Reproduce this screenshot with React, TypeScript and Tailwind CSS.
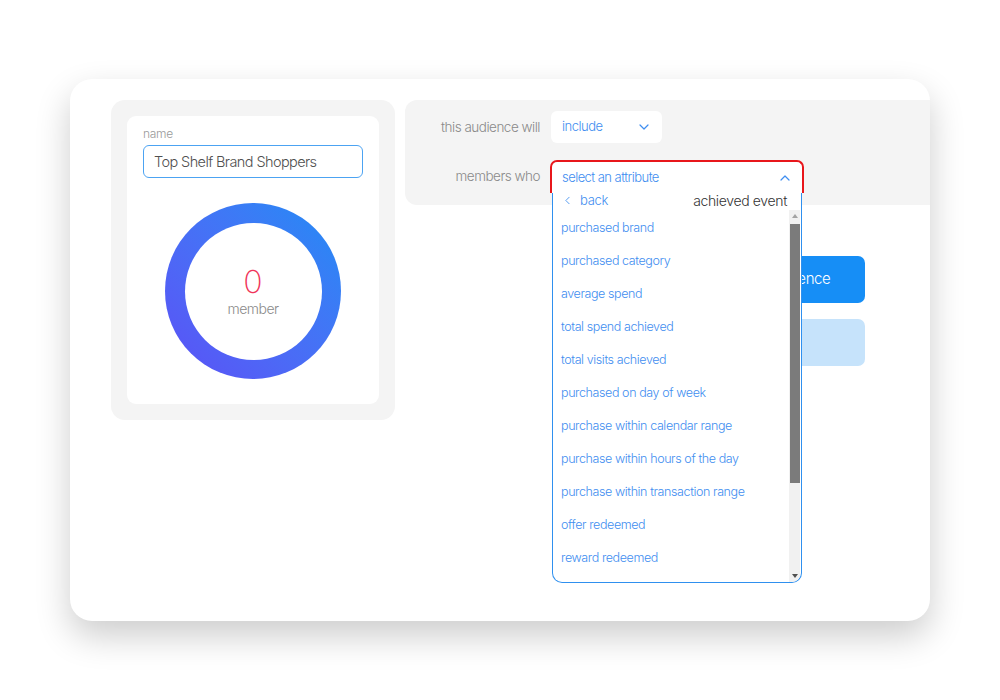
import React from 'react';
import { ChevronDown, ChevronUp, ChevronLeft } from 'lucide-react';

const ATTRIBUTES = [
  'purchased brand',
  'purchased category',
  'average spend',
  'total spend achieved',
  'total visits achieved',
  'purchased on day of week',
  'purchase within calendar range',
  'purchase within hours of the day',
  'purchase within transaction range',
  'offer redeemed',
  'reward redeemed',
];

// audience size ring
function MemberRing({ count }: { count: number }) {
  return (
    <div className="w-[176px] h-[176px] rounded-full bg-linear-to-bl from-[#1a8cf5] to-[#5a4ff6] flex items-center justify-center">
      <div className="w-[137px] h-[137px] rounded-full bg-white flex flex-col items-center justify-center">
        <span className="text-[32px] leading-none font-extralight text-[#f0345a] mt-[2px]">{count}</span>
        <span className="text-[14px] font-light tracking-[-0.5px] text-[#8a8a8a] leading-[18px] mt-[2px]">member</span>
      </div>
    </div>
  );
}

function AttributeDropdown() {
  return (
    <div className="absolute left-[145px] top-[60px] w-[254px] z-10">
      <div className="h-[33px] border-2 border-b-0 border-[#e8161b] rounded-t-[7px] bg-white flex items-center justify-between pl-[10px] pr-[9px]">
        <span className="text-[13px] tracking-[-0.55px] text-[#3f8ef0] font-light">select an attribute</span>
        <ChevronUp size={16} strokeWidth={1.8} className="text-[#3f8ef0]" />
      </div>
      <div className="mx-[2px] h-[390px] border border-t-0 border-[#2f90ef] rounded-b-[10px] bg-white flex flex-col overflow-hidden">
        <div className="h-[15px] flex items-center justify-between pl-[8px] pr-[14px]">
          <div className="flex items-center gap-[6px] text-[#3f8ef0]">
            <ChevronLeft size={13} strokeWidth={1.6} />
            <span className="text-[13px] font-light tracking-[-0.3px]">back</span>
          </div>
          <span className="text-[14px] font-light tracking-[-0.35px] text-[#333]">achieved event</span>
        </div>
        <div className="flex-1 flex pt-[2px]">
          <ul className="flex-1 pl-[8px] pt-[2px]">
            {ATTRIBUTES.map((a) => (
              <li key={a} className="h-[33px] flex items-center text-[12.5px] tracking-[-0.4px] font-light text-[#3f8ef0]">
                {a}
              </li>
            ))}
          </ul>
          {/* scrollbar */}
          <div className="w-[11px] mr-[1px] bg-[#f1f1f1] flex flex-col items-center">
            <div className="h-[12px] flex items-center justify-center">
              <div className="w-0 h-0 border-x-[3px] border-x-transparent border-b-[4px] border-b-[#a3a3a3]" />
            </div>
            <div className="w-[10px] h-[259px] bg-[#7b7b7b] mt-[2px]" />
            <div className="flex-1" />
            <div className="h-[12px] flex items-center justify-center">
              <div className="w-0 h-0 border-x-[3px] border-x-transparent border-t-[4px] border-t-[#505050]" />
            </div>
          </div>
        </div>
      </div>
    </div>
  );
}

export default function App() {
  return (
    <div className="w-[1000px] h-[700px] bg-white pt-[79px] px-[70px] font-['Inter',sans-serif]">
      <div className="h-[542px] bg-white rounded-[22px] shadow-[0_15px_35px_rgba(0,0,0,0.2)] overflow-hidden flex items-start pt-[21px] pl-[41px] gap-[10px]">
        {/* name + audience size */}
        <div className="w-[284px] h-[320px] bg-[#f4f4f4] rounded-[14px] p-[16px] pb-[16px]">
          <div className="h-full bg-white rounded-[9px] px-[16px] pt-[10px] flex flex-col">
            <span className="text-[12px] font-light tracking-[-0.3px] text-[#9a9a9a] leading-[16px]">name</span>
            <div className="mt-[3px] h-[33px] border border-[#4ca3f2] rounded-[6px] flex items-center px-[10px]">
              <span className="text-[14.5px] font-light tracking-[-0.6px] text-[#505050]">Top Shelf Brand Shoppers</span>
            </div>
            <div className="mt-[25px] flex justify-center">
              <MemberRing count={0} />
            </div>
          </div>
        </div>

        {/* rules */}
        <div className="flex-1 flex flex-col">
          <div className="relative h-[105px] bg-[#f4f4f4] rounded-l-[12px] pt-[11px]">
            <div className="flex items-center">
              <span className="w-[135px] text-right text-[13.5px] tracking-[-0.5px] font-light text-[#8a8a8a]">this audience will</span>
              <div className="ml-[11px] w-[111px] h-[32px] bg-white rounded-[6px] flex items-center justify-between pl-[11px] pr-[10px]">
                <span className="text-[13px] font-light tracking-[-0.5px] text-[#3f8ef0]">include</span>
                <ChevronDown size={16} strokeWidth={1.8} className="text-[#3f8ef0]" />
              </div>
            </div>
            <div className="flex items-center mt-[17px] h-[33px]">
              <span className="w-[135px] text-right text-[13.5px] tracking-[-0.5px] font-light text-[#8a8a8a]">members who</span>
            </div>
            <AttributeDropdown />
          </div>

          <div className="flex flex-col items-end pr-[65px] mt-[51px] gap-[16px]">
            <button className="w-[165px] h-[47px] rounded-[7px] bg-[#168ef6] text-white text-[15px] tracking-[-0.4px] font-light">
              save audience
            </button>
            <button className="w-[165px] h-[47px] rounded-[7px] bg-[#c6e3fb]" />
          </div>
        </div>
      </div>
    </div>
  );
}
